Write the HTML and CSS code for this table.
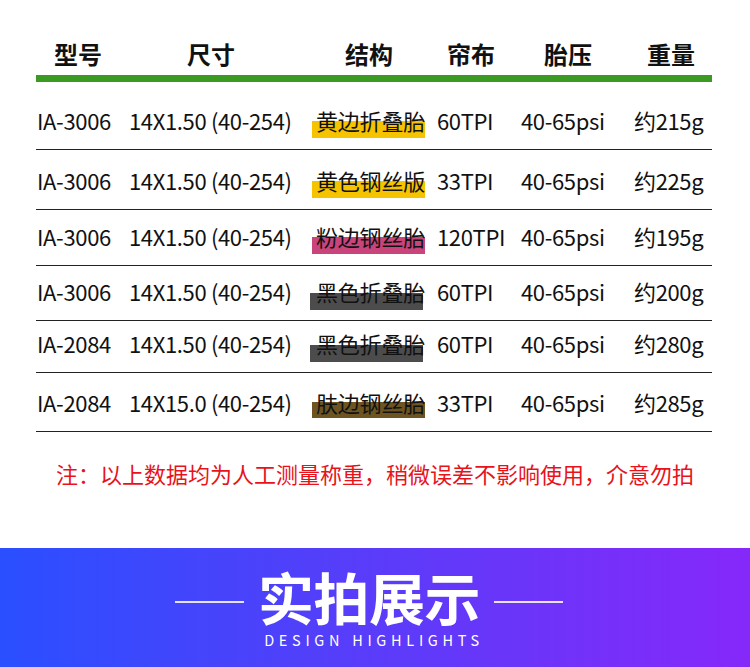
FILE: index.html
```html
<!DOCTYPE html>
<html lang="zh-CN">
<head>
<meta charset="utf-8">
<title>规格参数</title>
<link rel="stylesheet" href="styles.css">
</head>
<body>
<div class="page">
  <section class="spec">
    <div class="spec-head">
      <div class="h h1">型号</div>
      <div class="h h2">尺寸</div>
      <div class="h h3">结构</div>
      <div class="h h4">帘布</div>
      <div class="h h5">胎压</div>
      <div class="h h6">重量</div>
    </div>
    <div class="spec-bar"></div>
    <div class="rows">
      <div class="row">
        <span>IA-3006</span><span>14X1.50 (40-254)</span><span><span class="tag tag-yellow">黄边折叠胎</span></span><span>60TPI</span><span>40-65psi</span><span>约215g</span>
      </div>
      <div class="row">
        <span>IA-3006</span><span>14X1.50 (40-254)</span><span><span class="tag tag-yellow">黄色钢丝版</span></span><span>33TPI</span><span>40-65psi</span><span>约225g</span>
      </div>
      <div class="row">
        <span>IA-3006</span><span>14X1.50 (40-254)</span><span><span class="tag tag-pink">粉边钢丝胎</span></span><span>120TPI</span><span>40-65psi</span><span>约195g</span>
      </div>
      <div class="row">
        <span>IA-3006</span><span>14X1.50 (40-254)</span><span><span class="tag tag-dark">黑色折叠胎</span></span><span>60TPI</span><span>40-65psi</span><span>约200g</span>
      </div>
      <div class="row">
        <span>IA-2084</span><span>14X1.50 (40-254)</span><span><span class="tag tag-dark">黑色折叠胎</span></span><span>60TPI</span><span>40-65psi</span><span>约280g</span>
      </div>
      <div class="row">
        <span>IA-2084</span><span>14X15.0 (40-254)</span><span><span class="tag tag-brown">肤边钢丝胎</span></span><span>33TPI</span><span>40-65psi</span><span>约285g</span>
      </div>
    </div>
    <p class="note">注：以上数据均为人工测量称重，稍微误差不影响使用，介意勿拍</p>
  </section>
  <section class="banner">
    <div class="banner-title">
      <span class="rule"></span>
      <h2>实拍展示</h2>
      <span class="rule"></span>
    </div>
    <div class="banner-sub">DESIGN HIGHLIGHTS</div>
  </section>
</div>
</body>
</html>
```

FILE: styles.css
```css
* { box-sizing: border-box; }
html, body { margin: 0; padding: 0; background: #fff; }
body {
  font-family: "Noto Sans CJK SC", "Noto Sans", sans-serif;
  color: #111;
}
.page { width: 750px; height: 667px; overflow: hidden; }

.spec { padding: 0 38px 0 36px; height: 548px; }

.spec-head {
  display: flex;
  height: 75px;
  padding-top: 39px;
}
.h {
  font-size: 24px;
  font-weight: 700;
  line-height: 30px;
  text-align: center;
  color: #111;
}
.h1 { width: 84px; }
.h2 { width: 182px; }
.h3 { width: 134px; }
.h4 { width: 70px; }
.h5 { width: 124px; }
.h6 { width: 82px; }

.spec-bar { height: 7px; background: #3a9a22; }

.row {
  display: grid;
  grid-template-columns: 92px 187px 121px 84px 113px 1fr;
  align-items: end;
  padding-left: 1px;
  padding-bottom: 14px;
  border-bottom: 1px solid #222;
  font-size: 22px;
  line-height: 30px;
  letter-spacing: -0.35px;
  white-space: nowrap;
}
.row:nth-child(1) { height: 68px; }
.row:nth-child(2) { height: 60px; }
.row:nth-child(3) { height: 56px; }
.row:nth-child(4) { height: 55px; }
.row:nth-child(5) { height: 52px; }
.row:nth-child(6) { height: 59px; }

.tag {
  position: relative;
  z-index: 0;
  display: inline-block;
  letter-spacing: -0.2px;
}
.tag::before {
  content: "";
  position: absolute;
  z-index: -1;
  left: -4px;
  right: 0;
  top: 16px;
  height: 17px;
}
.tag-yellow::before { background: #f5c300; }
.tag-pink::before { background: #c9447b; }
.tag-dark::before { background: #4c4c4c; left: -6px; right: 2px; top: 17px; }
.tag-brown::before { background: #6d5421; top: 15px; height: 16px; }

.note {
  margin: 26px 0 0;
  text-align: center;
  color: #e8121b;
  font-size: 22px;
  letter-spacing: 0;
  line-height: 30px;
  padding-left: 2px;
}

.banner {
  height: 119px;
  background: linear-gradient(90deg, #2a4fff 0%, #5a3cf9 50%, #8628fa 100%);
  color: #fff;
  display: flex;
  flex-direction: column;
  align-items: center;
  padding-top: 22px;
}
.banner-title {
  display: flex;
  align-items: center;
  gap: 14px;
  height: 52px;
  margin-right: 12px;
}
.banner-title h2 {
  margin: 0;
  font-size: 56px;
  font-weight: 700;
  line-height: 52px;
  letter-spacing: -0.5px;
}
.rule {
  width: 69px;
  height: 2px;
  background: rgba(255,255,255,0.85);
  margin-top: 12px;
}
.banner-sub {
  font-size: 14.5px;
  letter-spacing: 4.7px;
  line-height: 18px;
  margin-top: 9px;
  margin-right: 2px;
}
```
